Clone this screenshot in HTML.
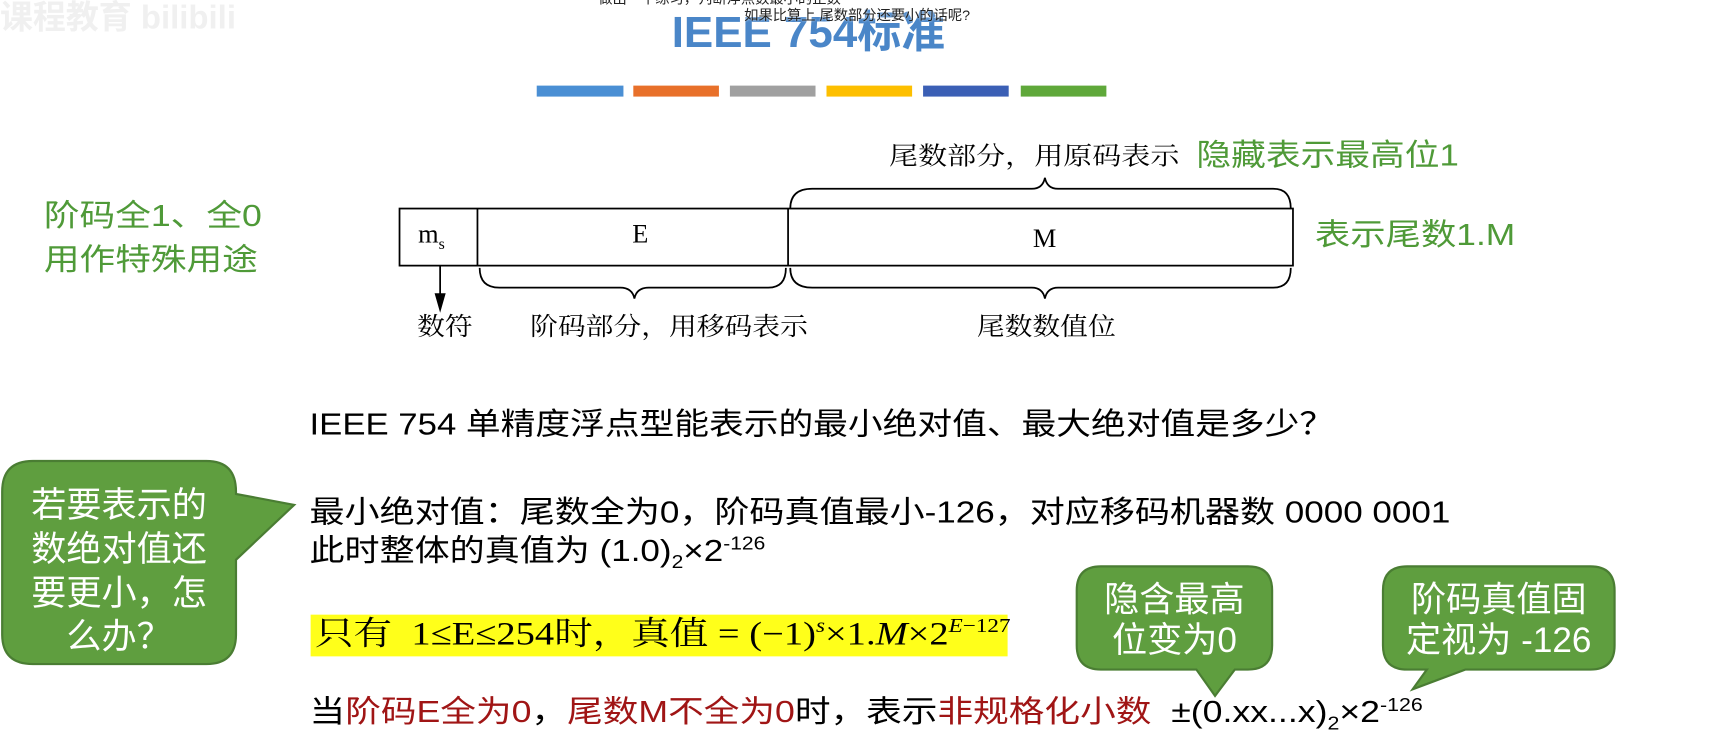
<!DOCTYPE html>
<html><head><meta charset="utf-8">
<style>
html,body{margin:0;padding:0;background:#fff;overflow:hidden;width:1721px;height:751px}
#s{position:absolute;left:0;top:0;width:1568px;height:684px;transform:scale(1.0976);transform-origin:0 0;font-family:"Liberation Sans","Noto Sans CJK SC",sans-serif}
.a{position:absolute;white-space:nowrap;line-height:1;transform-origin:0 0}
.serif{font-family:"Liberation Serif","Noto Serif CJK SC",serif}
.g{color:#4f9a38}
.r{color:#a01515}
.w{color:#fff}
sub,sup{font-size:60%;line-height:0}
</style></head><body><div id="s">
<div class="a" style="left:0;top:2px;font-size:30px;font-weight:bold;color:#f0f0f0">课程教育 bilibili</div>
<div class="a" style="left:612px;top:10px;font-size:40px;font-weight:bold;color:#4a86c8">IEEE 754标准</div>
<div class="a" style="left:545px;top:-8px;font-size:13px;color:#222;text-shadow:0 0 2px #fff">做出一个练习，判断浮点数最小的正数</div>
<div class="a" style="left:678px;top:7px;font-size:13px;color:#222;text-shadow:0 0 2px #fff">如果比算上 尾数部分还要小的话呢?</div>
<div class="a" style="left:489px;top:78px;width:79px;height:10px;background:#4a8fd4"></div>
<div class="a" style="left:577px;top:78px;width:78px;height:10px;background:#e8702a"></div>
<div class="a" style="left:665px;top:78px;width:78px;height:10px;background:#a0a0a0"></div>
<div class="a" style="left:753px;top:78px;width:78px;height:10px;background:#fdbf00"></div>
<div class="a" style="left:841px;top:78px;width:78px;height:10px;background:#3b5fb5"></div>
<div class="a" style="left:930px;top:78px;width:78px;height:10px;background:#5fa83a"></div>

<div class="a serif" style="left:810px;top:131px;font-size:23px;transform:scaleX(1.15)">尾数部分，用原码表示</div>
<div class="a g" style="left:1090px;top:128px;font-size:28px;transform:scaleX(1.13)">隐藏表示最高位1</div>
<div class="a g" style="left:40px;top:183px;font-size:28px;transform:scaleX(1.16)">阶码全1、全0</div>
<div class="a g" style="left:40px;top:223px;font-size:28px;transform:scaleX(1.16)">用作特殊用途</div>
<div class="a g" style="left:1198px;top:200px;font-size:28px;transform:scaleX(1.15)">表示尾数1.M</div>

<svg class="a" style="left:0;top:0" width="1568" height="684" fill="none" stroke="#000" stroke-width="1.6">
<rect x="364" y="190" width="814" height="52"/>
<line x1="435" y1="190" x2="435" y2="242"/><line x1="718" y1="190" x2="718" y2="242"/>
<path d="M720 190 Q720 172 740 172 L940 172 Q950 172 952 162 Q954 172 964 172 L1160 172 Q1176 172 1176 190"/>
<path d="M437 244 Q437 262 455 262 L565 262 Q576 262 578 272 Q580 262 591 262 L700 262 Q716 262 716 244"/>
<path d="M720 244 Q720 262 740 262 L940 262 Q950 262 952 272 Q954 262 964 262 L1160 262 Q1176 262 1176 244"/>
<line x1="401" y1="242" x2="401" y2="275"/>
<path d="M397 268 L401 282 L405 268 Z" fill="#000"/>
</svg>
<div class="a serif" style="left:381px;top:202px;font-size:24px">m<sub>s</sub></div>
<div class="a serif" style="left:576px;top:202px;font-size:24px">E</div>
<div class="a serif" style="left:941px;top:206px;font-size:24px">M</div>
<div class="a serif" style="left:380px;top:286px;font-size:23px;transform:scaleX(1.1)">数符</div>
<div class="a serif" style="left:483px;top:286px;font-size:23px;transform:scaleX(1.1)">阶码部分，用移码表示</div>
<div class="a serif" style="left:890px;top:286px;font-size:23px;transform:scaleX(1.1)">尾数数值位</div>

<div class="a" style="left:282px;top:373px;font-size:28px;transform:scaleX(1.13)">IEEE 754 单精度浮点型能表示的最小绝对值、最大绝对值是多少？</div>
<div class="a" style="left:282px;top:453px;font-size:28px;transform:scaleX(1.14)">最小绝对值：尾数全为0，阶码真值最小-126，对应移码机器数 0000 0001</div>
<div class="a" style="left:282px;top:488px;font-size:28px;transform:scaleX(1.14)">此时整体的真值为 (1.0)<sub>2</sub>×2<sup>-126</sup></div>
<div class="a" style="left:283px;top:560px;width:635px;height:38px;background:#ffff1a"></div>
<div class="a serif" style="left:287px;top:563px;font-size:30px;transform:scaleX(1.17)">只有&nbsp; 1≤E≤254时，真值 = (−1)<sup><i>s</i></sup>×1.<i>M</i>×2<sup><i>E</i>−127</sup></div>
<div class="a" style="left:282px;top:635px;font-size:28px;transform:scaleX(1.16)">当<span class="r">阶码E全为0</span>，<span class="r">尾数M不全为0</span>时，表示<span class="r">非规格化小数</span>&nbsp; ±(0.xx...x)<sub>2</sub>×2<sup>-126</sup></div>

<svg class="a" style="left:0;top:0" width="1568" height="684" fill="#5f9e3f" stroke="#4a7d33" stroke-width="2">
<path d="M30 420 L188 420 Q215 420 215 448 L215 450 L268 460 L215 510 L215 578 Q215 605 188 605 L30 605 Q2 605 2 578 L2 448 Q2 420 30 420 Z"/>
<path d="M1003 516 L1137 516 Q1159 516 1159 538 L1159 588 Q1159 610 1137 610 L1125 610 L1107 634 L1090 610 L1003 610 Q981 610 981 588 L981 538 Q981 516 1003 516 Z"/>
<path d="M1282 516 L1449 516 Q1471 516 1471 538 L1471 588 Q1471 610 1449 610 L1335 610 L1287 628 L1300 610 L1282 610 Q1260 610 1260 588 L1260 538 Q1260 516 1282 516 Z"/>
</svg>
<div class="a w" style="left:26px;top:440px;font-size:32px;line-height:40px;width:165px;text-align:center">若要表示的<br>数绝对值还<br>要更小，怎<br>么办？</div>
<div class="a w" style="left:981px;top:528px;width:178px;text-align:center;font-size:32px;line-height:37px">隐含最高<br>位变为0</div>
<div class="a w" style="left:1260px;top:528px;width:211px;text-align:center;font-size:32px;line-height:37px">阶码真值固<br>定视为 -126</div>
</div></body></html>
